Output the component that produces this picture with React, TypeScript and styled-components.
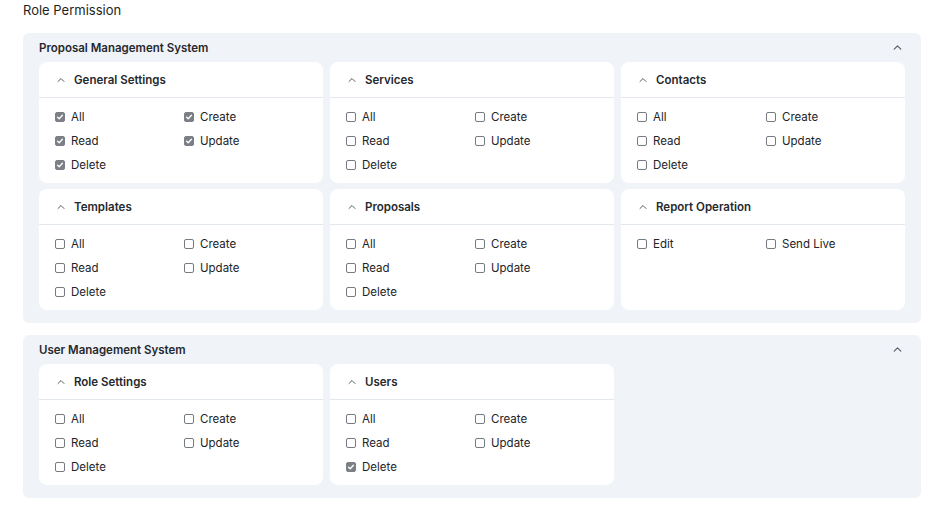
import React, { useState } from 'react';
import styled, { createGlobalStyle } from 'styled-components';

interface permGroup {
  title: string;
  perms: string[];
  checked: string[];
}

interface permSystem {
  name: string;
  groups: permGroup[];
}

const CRUD = ['All', 'Create', 'Read', 'Update', 'Delete'];

const SYSTEMS: permSystem[] = [
  {
    name: 'Proposal Management System',
    groups: [
      { title: 'General Settings', perms: CRUD, checked: CRUD },
      { title: 'Services', perms: CRUD, checked: [] },
      { title: 'Contacts', perms: CRUD, checked: [] },
      { title: 'Templates', perms: CRUD, checked: [] },
      { title: 'Proposals', perms: CRUD, checked: [] },
      { title: 'Report Operation', perms: ['Edit', 'Send Live'], checked: [] },
    ],
  },
  {
    name: 'User Management System',
    groups: [
      { title: 'Role Settings', perms: CRUD, checked: [] },
      { title: 'Users', perms: CRUD, checked: ['Delete'] },
    ],
  },
];

const Chevron: React.FC<{ size: number }> = ({ size }) => (
  <svg width={size} height={size} viewBox="0 0 10 10" fill="none">
    <polyline
      points="2,6.5 5,3.5 8,6.5"
      stroke="#555b64"
      strokeWidth="1"
      strokeLinecap="round"
      strokeLinejoin="round"
    />
  </svg>
);

const PermCheck: React.FC<{ label: string; initial: boolean }> = ({ label, initial }) => {
  const [on, setOn] = useState<boolean>(initial);
  return (
    <CheckRow onClick={() => setOn(!on)}>
      <Box $on={on}>
        {on && (
          <svg width="8" height="8" viewBox="0 0 8 8" fill="none">
            <polyline
              points="1.6,4.2 3.2,5.8 6.4,2.2"
              stroke="#ffffff"
              strokeWidth="1.3"
              strokeLinecap="round"
              strokeLinejoin="round"
            />
          </svg>
        )}
      </Box>
      <CheckLabel>{label}</CheckLabel>
    </CheckRow>
  );
};

const GroupCard: React.FC<{ group: permGroup }> = ({ group }) => (
  <Card>
    <CardHead>
      <Chevron size={10} />
      <CardTitle>{group.title}</CardTitle>
    </CardHead>
    <CardBody>
      {group.perms.map((p) => (
        <PermCheck key={p} label={p} initial={group.checked.includes(p)} />
      ))}
    </CardBody>
  </Card>
);

const App: React.FC = () => {
  return (
    <Page>
      <GlobalStyle />
      <PageTitle>Role Permission</PageTitle>
      <SystemList>
        {SYSTEMS.map((s) => (
          <Panel key={s.name}>
            <PanelHead>
              <PanelTitle>{s.name}</PanelTitle>
              <Chevron size={11} />
            </PanelHead>
            <CardGrid>
              {s.groups.map((g) => (
                <GroupCard key={g.title} group={g} />
              ))}
            </CardGrid>
          </Panel>
        ))}
      </SystemList>
    </Page>
  );
};

export default App;

const GlobalStyle = createGlobalStyle`
  body {
    margin: 0;
    background: #ffffff;
    font-family: Inter, "Noto Sans", sans-serif;
    color: #1d1f23;
  }
`;

const Page = styled.div`
  padding: 2px 23px 12px 23px;
`;

const PageTitle = styled.h1`
  margin: 0 0 15px 0;
  font-size: 13px;
  line-height: 16px;
  font-weight: 400;
`;

const SystemList = styled.div`
  display: flex;
  flex-direction: column;
  gap: 12px;
`;

const Panel = styled.section`
  background: #f0f3f8;
  border-radius: 6px;
  padding: 0 16px 13px 16px;
`;

const PanelHead = styled.div`
  height: 29px;
  display: flex;
  align-items: center;
  justify-content: space-between;
  padding-right: 2px;
`;

const PanelTitle = styled.h2`
  margin: 0;
  font-size: 11.5px;
  font-weight: 600;
  color: #26292e;
`;

const CardGrid = styled.div`
  display: grid;
  grid-template-columns: repeat(3, 284px);
  gap: 6px 7px;
`;

const Card = styled.div`
  background: #ffffff;
  border-radius: 8px;
`;

const CardHead = styled.div`
  height: 35px;
  display: flex;
  align-items: center;
  gap: 8px;
  padding-left: 17px;
  border-bottom: 1px solid #e3e8ee;
`;

const CardTitle = styled.span`
  font-size: 11.5px;
  font-weight: 600;
  color: #26292e;
`;

const CardBody = styled.div`
  display: grid;
  grid-template-columns: 129px 1fr;
  grid-auto-rows: 16px;
  row-gap: 8px;
  padding: 11px 16px 10px 16px;
`;

const CheckRow = styled.label`
  display: flex;
  align-items: center;
  gap: 6px;
  cursor: pointer;
`;

const Box = styled.span<{ $on: boolean }>`
  width: 10px;
  height: 10px;
  box-sizing: border-box;
  border-radius: 2px;
  display: flex;
  align-items: center;
  justify-content: center;
  border: 1px solid ${(p) => (p.$on ? '#7b7f86' : '#767a81')};
  background: ${(p) => (p.$on ? '#7b7f86' : '#ffffff')};
`;

const CheckLabel = styled.span`
  font-size: 11.5px;
  line-height: 16px;
  color: #222428;
`;
